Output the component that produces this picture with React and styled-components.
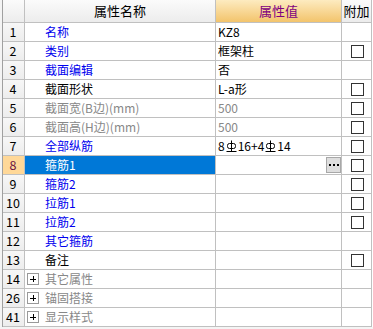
import React from "react";
import styled, { createGlobalStyle, css } from "styled-components";

const Global = createGlobalStyle`
  html, body { margin: 0; padding: 0; background: #f4f4f4; }
  body { font-family: "Noto Sans CJK SC", "DejaVu Sans", sans-serif; font-size: 12px; }
`;

const Grid = styled.div`
  margin-left: 2px;
  width: 370px;
  border-left: 1px solid #a0a0a0;
  background: #fff;
  display: grid;
  grid-template-columns: 22px 191px 126px 30px;
  grid-auto-rows: 19px;
  grid-template-rows: 23px;
`;

const Cell = styled.div`
  box-sizing: border-box;
  border-right: 1px solid #c0c0c0;
  border-bottom: 1px solid #c0c0c0;
  line-height: 18px;
  white-space: nowrap;
  overflow: hidden;
  display: flex;
  align-items: center;
  background: #fff;
`;

const HeadCell = styled(Cell)`
  line-height: 22px;
  justify-content: center;
  color: ${(p) => (p.$value ? "#800080" : "#000")};
  font-size: 13px;
  background: ${(p) =>
    p.$value
      ? "linear-gradient(#fdebc0, #f3c46c)"
      : "linear-gradient(#fbfbfb, #ececec)"};
`;

const NumCell = styled(Cell)`
  justify-content: center;
  padding-right: 1px;
  font-size: 12.5px;
  color: ${(p) => (p.$selected ? "#6a1040" : "#000")};
  background: ${(p) =>
    p.$selected ? "#ffd898" : "linear-gradient(#f7f7f7, #ededed)"};
`;

const colorMap = { blue: "#0000ee", black: "#000", gray: "#888" };

const NameCell = styled(Cell)`
  padding-left: ${(p) => (p.$tree ? "2px" : "20px")};
  color: ${(p) => (p.$selected ? "#fff" : colorMap[p.$color])};
  ${(p) =>
    p.$selected &&
    css`
      background: #0078d7;
    `}
`;

const ValueCell = styled(Cell)`
  padding-left: 2px;
  color: ${(p) => (p.$gray ? "#888" : "#000")};
  position: relative;
`;

const ExtraCell = styled(Cell)`
  justify-content: center;
`;

const Check = styled.span`
  box-sizing: border-box;
  width: 13px;
  height: 13px;
  border: 1px solid #333;
  background: #fff;
  margin-left: 1px;
`;

const PlusBox = styled.span`
  box-sizing: border-box;
  width: 12px;
  height: 12px;
  border: 1px solid #999;
  margin: 0 6px 0 0;
  position: relative;
  flex: none;
  &::before,
  &::after {
    content: "";
    position: absolute;
    background: #000;
  }
  &::before { left: 2px; right: 2px; top: 4.5px; height: 1px; }
  &::after { top: 2px; bottom: 2px; left: 4.5px; width: 1px; }
`;

const DotsButton = styled.span`
  position: absolute;
  right: 0;
  top: 1px;
  box-sizing: border-box;
  width: 15px;
  height: 16px;
  background: #dedede;
  border: 1px solid #a8a8a8;
  display: flex;
  align-items: center;
  justify-content: center;
  gap: 2px;
  & > i {
    width: 2px;
    height: 2px;
    background: #000;
  }
`;

const Rebar = () => (
  <svg width="11" height="13" viewBox="0 0 11 13" style={{ margin: "0 1px" }}>
    <line x1="5.5" y1="0.5" x2="5.5" y2="11.5" stroke="#000" strokeWidth="1" />
    <rect x="1.5" y="3.5" width="8" height="5" rx="2" fill="none" stroke="#000" strokeWidth="1" />
    <line x1="0.5" y1="11.5" x2="10.5" y2="11.5" stroke="#000" strokeWidth="1" />
  </svg>
);

const rows = [
  { n: "1", name: "名称", color: "blue", value: "KZ8", check: false },
  { n: "2", name: "类别", color: "blue", value: "框架柱", check: true },
  { n: "3", name: "截面编辑", color: "blue", value: "否", check: false },
  { n: "4", name: "截面形状", color: "black", value: "L-a形", check: true },
  { n: "5", name: "截面宽(B边)(mm)", color: "gray", value: "500", gray: true, check: true },
  { n: "6", name: "截面高(H边)(mm)", color: "gray", value: "500", gray: true, check: true },
  { n: "7", name: "全部纵筋", color: "blue", value: "rebar", check: true },
  { n: "8", name: "箍筋1", color: "blue", value: "", selected: true, check: true },
  { n: "9", name: "箍筋2", color: "blue", value: "", check: true },
  { n: "10", name: "拉筋1", color: "blue", value: "", check: true },
  { n: "11", name: "拉筋2", color: "blue", value: "", check: true },
  { n: "12", name: "其它箍筋", color: "blue", value: "", check: false },
  { n: "13", name: "备注", color: "black", value: "", check: true },
  { n: "14", name: "其它属性", color: "gray", tree: true },
  { n: "26", name: "锚固搭接", color: "gray", tree: true },
  { n: "41", name: "显示样式", color: "gray", tree: true },
];

export default function App() {
  return (
    <>
      <Global />
      <Grid>
        <HeadCell />
        <HeadCell>属性名称</HeadCell>
        <HeadCell $value>属性值</HeadCell>
        <HeadCell>附加</HeadCell>
        {rows.map((r) => (
          <React.Fragment key={r.n}>
            <NumCell $selected={r.selected}>{r.n}</NumCell>
            <NameCell $color={r.color} $selected={r.selected} $tree={r.tree}>
              {r.tree && <PlusBox />}
              {r.name}
            </NameCell>
            <ValueCell $gray={r.gray}>
              {r.value === "rebar" ? (
                <>
                  8<Rebar />16+4<Rebar />14
                </>
              ) : (
                r.value
              )}
              {r.selected && (
                <DotsButton>
                  <i />
                  <i />
                  <i />
                </DotsButton>
              )}
            </ValueCell>
            <ExtraCell>{r.check && <Check />}</ExtraCell>
          </React.Fragment>
        ))}
      </Grid>
    </>
  );
}
